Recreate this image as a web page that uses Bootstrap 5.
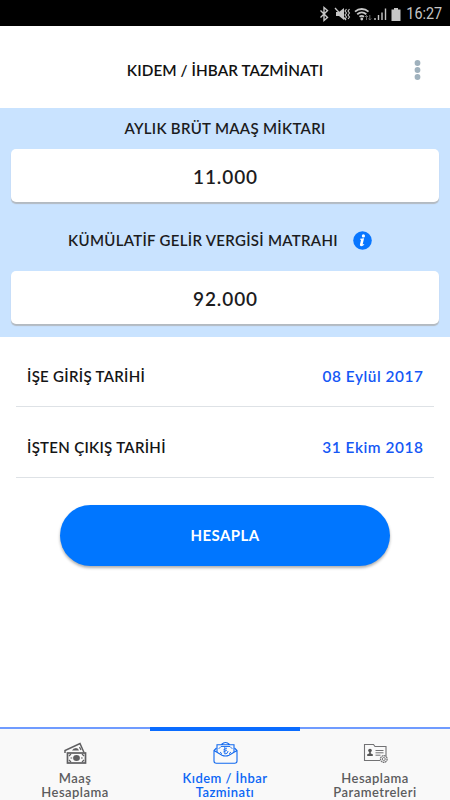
<!DOCTYPE html>
<html lang="tr">
<head>
<meta charset="utf-8">
<meta name="viewport" content="width=device-width, initial-scale=1">
<title>Kıdem / İhbar Tazminatı</title>
<link href="https://cdn.jsdelivr.net/npm/bootstrap@5.3.0/dist/css/bootstrap.min.css" rel="stylesheet">
<style>
body{font-family:Lato,"Open Sans",sans-serif;color:#1c1c1e;background:#fff;font-size:15px;font-weight:600;line-height:20px}
.screen{width:450px;height:800px}
.status{height:26px;background:#000;color:#c6c6c6;font:400 16.5px/28px Roboto,sans-serif;padding:1px 8px 0 0}
.status svg{margin-right:-4px}
.clock{transform:scaleX(.87);transform-origin:right}
.topbar{height:82px;padding:6px 20px 0}
.topbar h1{font-size:15.3px;font-weight:600;color:#111;line-height:20px;letter-spacing:.06px}
.panel{height:228.500px;background:#c9e3ff;padding:10px 11px 0;letter-spacing:.3px}
.amount{height:53px;border:0;border-radius:5px;box-shadow:0 2px 1px #b3bac1;font-size:19px;font-weight:600;letter-spacing:.9px;color:#1c1c1e;padding:2px 0 0 1px}
.gap-a{margin-top:11px}
.second{margin:28px 0 21px;padding-right:10px}
.info{margin-left:15px}
.dates{padding:0 16px}
.dates .list-group-item{padding:0 11px;border-color:#e3e3e3;color:#151517;letter-spacing:.3px}
.dates .d1{height:70.500px;padding-top:9px}
.dates .d2{height:71px;padding-top:9px}
.dates .date{color:#1558f5;font-size:15.4px;letter-spacing:.55px;margin-right:-.5px}
.calc{width:330px;height:61px;margin-top:27px;background:#0076ff;color:#fff;font-size:15px;font-weight:700;letter-spacing:.4px;padding:0 0 1px;box-shadow:0 2px 3px rgba(0,0,0,.32)}
.tabs{height:73px;background:#f9f9f9}
.tabs .nav-link{padding:12px 0 0;border-top:2px solid #6f9bff;color:#5c5c5e;font-size:13px;line-height:14px;border-radius:0;letter-spacing:.45px}
.tabs .nav-link.active{border-top:4px solid #0a6cff;color:#0c66f5;padding-top:10px}
.tabs svg{display:block;margin:0 auto 6px}
</style>
<script src="https://cdn.jsdelivr.net/npm/bootstrap@5.3.0/dist/js/bootstrap.bundle.min.js"></script>
</head>
<body>
<div class="screen d-flex flex-column overflow-hidden">
  <div class="status d-flex justify-content-end align-items-center">
    <svg width="86" height="18" viewBox="0 0 86 18" fill="none" stroke="#c6c6c6">
      <path d="M1.500 5.500l7 7L5 15.500v-13l3.500 3-7 7" stroke-width="1.400"/>
      <path d="M17 7h3l5-4v12l-5-4h-3z" fill="#c6c6c6" stroke="none"/>
      <path d="M16 3l11 12" stroke-width="1.300"/>
      <path d="M27.500 4l-1.500 2 1.500 2-1.500 2 1.500 2-1.500 2M30.500 4l-1.500 2 1.500 2-1.500 2 1.500 2-1.500 2" stroke-width="1.100"/>
      <path d="M36 6.700c4-3.600 9.500-3.600 13.500 0M38.200 9.300c2.700-2.300 6.400-2.300 9.100 0M40.500 11.800c1.300-1 3.200-1 4.500 0" stroke-width="1.800"/>
      <circle cx="42.800" cy="14" r="1.400" fill="#c6c6c6" stroke="none"/>
      <path d="M47.500 15v-4.500m-1.500 1.500l1.500-1.500 1.500 1.500M50.800 10v5m-1.400-1.500l1.400 1.500 1.400-1.500" stroke="#777" stroke-width=".9"/>
      <path d="M56 15v-2M59.500 15v-5M63 15V7.500M66.500 15V3.500" stroke-width="1.400"/>
      <path d="M72.500 4.500H75V3h4v1.500h2.500V16h-9z" fill="#c6c6c6" stroke="none"/>
    </svg>
    <span class="clock">16:27</span>
  </div>
  <header class="topbar d-flex align-items-center justify-content-center position-relative">
    <h1 class="mb-0">KIDEM / İHBAR TAZMİNATI</h1>
    <svg class="position-absolute end-0 me-4" width="17" height="22" viewBox="0 0 17 22" fill="#9fb1bd"><circle cx="8.500" cy="4" r="2.900"/><circle cx="8.500" cy="11" r="2.900"/><circle cx="8.500" cy="18" r="2.900"/></svg>
  </header>
  <section class="panel text-center">
    <label class="d-block" for="salary">AYLIK BRÜT MAAŞ MİKTARI</label>
    <input id="salary" class="form-control amount gap-a text-center" value="11.000">
    <div class="second d-flex align-items-center justify-content-center">
      <label for="base">KÜMÜLATİF GELİR VERGİSİ MATRAHI</label>
      <svg class="info" width="19" height="19" viewBox="0 0 19 19"><circle cx="9.500" cy="9.500" r="9.300" fill="#0876ff"/><circle cx="10.400" cy="4.900" r="1.600" fill="#fff"/><path d="M7.100 7.800l4-.6-1.400 6c-.1.600.5.500 1.300-.1l.3.500c-1 1.100-2 1.600-3 1.600-1.200 0-1.600-.8-1.300-1.900l1-4.200c.1-.5-.2-.6-1-.7z" fill="#fff"/></svg>
    </div>
    <input id="base" class="form-control amount text-center" value="92.000">
  </section>
  <div class="dates list-group list-group-flush">
    <div class="list-group-item d1 border-bottom d-flex align-items-center justify-content-between"><span>İŞE GİRİŞ TARİHİ</span><span class="date">08 Eylül 2017</span></div>
    <div class="list-group-item d2 border-bottom d-flex align-items-center justify-content-between"><span>İŞTEN ÇIKIŞ TARİHİ</span><span class="date">31 Ekim 2018</span></div>
  </div>
  <button class="btn calc rounded-pill border-0 mx-auto" type="button">HESAPLA</button>
  <nav class="tabs nav nav-fill mt-auto flex-nowrap">
    <a class="nav-link col-4 text-center" href="#">
      <svg width="25" height="24" viewBox="0 0 25 24" fill="none" stroke="#5f5f61"><path d="M2 12V9.500L17 2.500l4 9" stroke-width="1.500"/><path d="M9 9.500q1-2.500 4-2.500 2.500 0 3 2.500z" fill="#5f5f61" stroke="none"/><path d="M16.500 6l1.500 3" stroke-width="1.200"/><rect x="4.500" y="12" width="18" height="10" stroke-width="1.700"/><ellipse cx="13.500" cy="17" rx="3.400" ry="2.900" fill="#5f5f61" stroke="none"/><path d="M6 15l2-2M19 13l2 2M6 19l2 2M19 21l2-2M7.500 17h1.700M18 17h1.700" stroke-width="1.200"/></svg>
      Maaş<br>Hesaplama</a>
    <a class="nav-link active col-4 text-center" href="#">
      <svg width="25" height="24" viewBox="0 0 25 24" fill="none" stroke="#1169ef"><path d="M3.500 7L1 9.500V20q0 2.200 2.200 2.200h18.600Q24 22.200 24 20V9.500L21.500 7M1 9.500l8 4.700q3.500 1.700 7 0l8-4.700" stroke-width="1.100"/><path d="M4 11V3.800h17V11M8.500 3.500q4-4 8 0" stroke-width="1.100"/><path d="M6 8v-.5l2-2h9l2 2V8M7 11l2 1.800M18 11l-2 1.800" stroke-width=".9"/><path d="M11.800 6v7q3 0 3.300-3M10.300 9l3.700-2M10.300 11l3.700-2" stroke-width=".9"/></svg>
      Kıdem / İhbar<br>Tazminatı</a>
    <a class="nav-link col-4 text-center" href="#">
      <svg width="25" height="24" viewBox="0 0 25 24" fill="none" stroke="#727274"><path d="M17 19.500H1.500v-16h9l1.500 2h11v10" stroke-width="1.100"/><circle cx="7" cy="9.500" r="1.800" fill="#555" stroke="none"/><path d="M6.200 10.500h1.600v2l2 .7V15H4.200v-1.800l2-.7z" fill="#555" stroke="none"/><path d="M12.500 9.500h8M12.500 11.800h8M12.500 14.200h5"/><circle cx="20.800" cy="18" r="3.300" stroke-width="1.300" stroke-dasharray="1.700 .5"/><circle cx="20.800" cy="18" r="1.500" stroke-width=".9"/></svg>
      Hesaplama<br>Parametreleri</a>
  </nav>
</div>
</body>
</html>
